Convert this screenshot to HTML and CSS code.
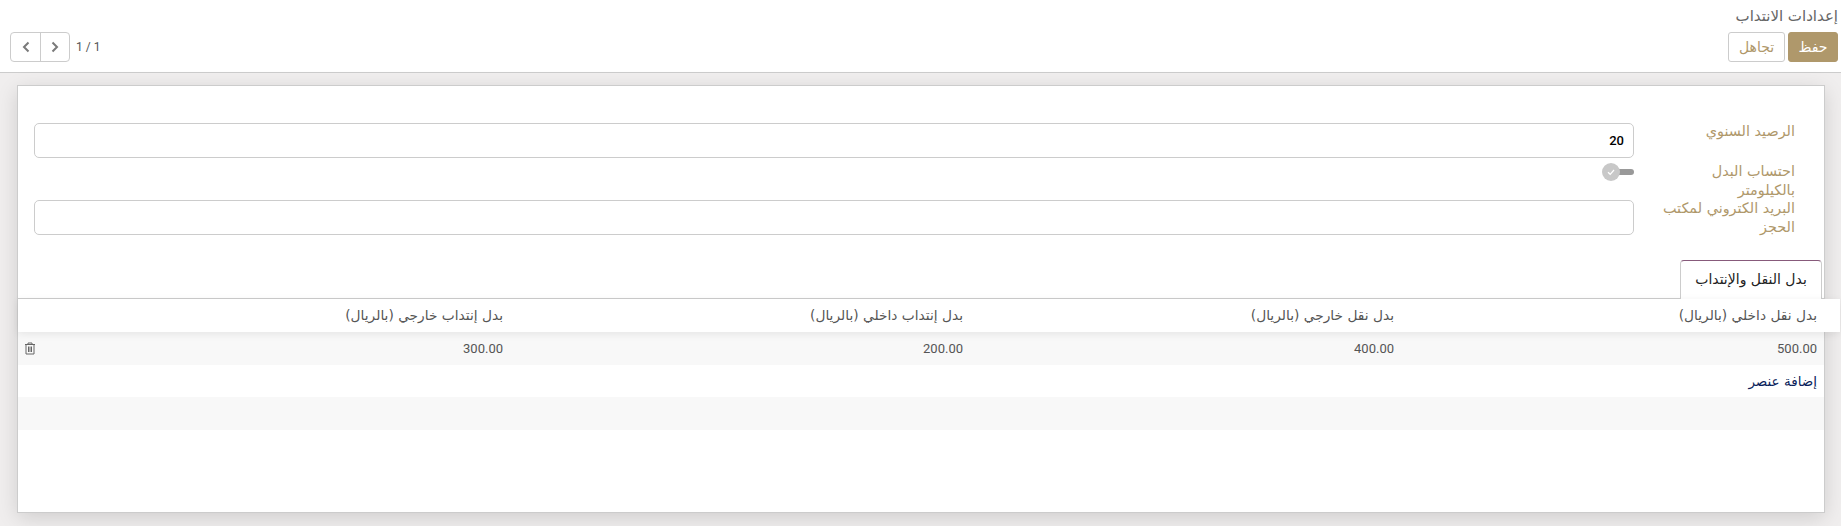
FILE: index.html
```html
<!DOCTYPE html>
<html lang="ar" dir="rtl">

<head>
    <meta charset="UTF-8" />
    <title>إعدادات الانتداب</title>
    <link rel="stylesheet" href="styles.css">
</head>

<body>
    <header class="control-panel">
        <div class="breadcrumb">إعدادات الانتداب</div>
        <div class="panel-row">
            <div class="panel-buttons">
                <button class="btn btn-primary">حفظ</button>
                <button class="btn btn-secondary">تجاهل</button>
            </div>
            <div class="pager">
                <span class="pager-value" dir="ltr">1 / 1</span>
                <div class="pager-buttons" dir="ltr">
                    <button class="pager-btn">
                        <svg width="10" height="12" viewBox="0 0 10 12"><path d="M7.500 1.500 3 6l4.500 4.500" /></svg>
                    </button>
                    <button class="pager-btn">
                        <svg width="10" height="12" viewBox="0 0 10 12"><path d="M2.500 1.500 7 6l-4.500 4.500" /></svg>
                    </button>
                </div>
            </div>
        </div>
    </header>

    <main class="content">
        <section class="sheet">
            <div class="form-group">
                <div class="form-row">
                    <label class="form-label">الرصيد السنوي</label>
                    <input class="form-input" type="text" value="20" dir="rtl">
                </div>
                <div class="form-row form-row-toggle">
                    <label class="form-label">احتساب البدل بالكيلومتر</label>
                    <div class="toggle">
                        <span class="toggle-track"></span>
                        <span class="toggle-knob">
                            <svg width="10" height="10" viewBox="0 0 10 10"><path d="M2 5.200 4.200 7.300 8 3" /></svg>
                        </span>
                    </div>
                </div>
                <div class="form-row">
                    <label class="form-label">البريد الكتروني لمكتب الحجز</label>
                    <input class="form-input" type="text">
                </div>
            </div>

            <div class="tabs">
                <div class="tab">بدل النقل والإنتداب</div>
            </div>

            <div class="list-head list-cols">
                <div>بدل نقل داخلي (بالريال)</div>
                <div>بدل نقل خارجي (بالريال)</div>
                <div>بدل إنتداب داخلي (بالريال)</div>
                <div>بدل إنتداب خارجي (بالريال)</div>
                <div></div>
            </div>
            <div class="list-row list-cols">
                <div>500.00</div>
                <div>400.00</div>
                <div>200.00</div>
                <div>300.00</div>
                <div class="trash">
                    <svg width="12" height="13" viewBox="0 0 12 13">
                        <path d="M1 2.500h10M4 2.500V1h4v1.500M2 2.500v9.500h8V2.500M4.500 4.500v5.500M6 4.500v5.500M7.500 4.500v5.500" />
                    </svg>
                </div>
            </div>
            <div class="list-add"><a class="add-link">إضافة عنصر</a></div>
            <div class="list-empty"></div>
        </section>
    </main>
</body>

</html>
```

FILE: styles.css
```css
* {
    box-sizing: border-box;
}

html,
body {
    height: 100%;
}

body {
    margin: 0;
    background-color: #f0eeee;
    font-family: "DejaVu Sans", "Noto Sans", sans-serif;
    font-size: 14px;
    color: #666;
    overflow: hidden;
    display: flex;
    flex-direction: column;
}

.control-panel {
    height: 73px;
    background-color: #fff;
    border-bottom: 1px solid #ccc;
    padding: 6px 3px 0 3px;
}

.breadcrumb {
    height: 26px;
    line-height: 20px;
    font-size: 15px;
    color: #666;
}

.panel-row {
    display: flex;
    justify-content: space-between;
    align-items: center;
}

.panel-buttons {
    display: flex;
    gap: 3px;
}

.btn {
    height: 30px;
    border-radius: 3px;
    font-family: inherit;
    font-size: 14px;
    padding: 0;
}

.btn-primary {
    width: 50px;
    background-color: #af986b;
    border: 1px solid #af986b;
    color: #fff;
}

.btn-secondary {
    width: 57px;
    background-color: #fff;
    border: 1px solid #ccc;
    color: #af986b;
}

.pager {
    display: flex;
    align-items: center;
    gap: 6px;
    margin-left: 7px;
}

.pager-value {
    font-family: Roboto, sans-serif;
    font-size: 12px;
    color: #555;
}

.pager-buttons {
    display: flex;
    border: 1px solid #ccc;
    border-radius: 4px;
    height: 30px;
}

.pager-btn {
    width: 29px;
    background: none;
    border: none;
    padding: 0;
    display: flex;
    align-items: center;
    justify-content: center;
}

.pager-btn + .pager-btn {
    border-left: 1px solid #ccc;
}

.pager-btn path {
    fill: none;
    stroke: #7a7a7a;
    stroke-width: 2;
}

.content {
    flex: 1;
    padding: 12px 16px 13px 17px;
}

.sheet {
    height: 100%;
    background-color: #fff;
    border: 1px solid #ccc;
    box-shadow: 0 5px 20px -1px rgba(0, 0, 0, 0.15);
}

.form-group {
    padding: 37px 0 0 16px;
}

.form-row {
    display: flex;
    align-items: flex-start;
}

.form-label {
    width: 190px;
    flex-shrink: 0;
    margin-top: -1px;
    padding: 0 29px 0 26px;
    color: #af986b;
    font-size: 14.400px;
    line-height: 19px;
}

.form-input {
    flex: 1;
    height: 35px;
    border: 1px solid #ccc;
    border-radius: 5px;
    padding: 0 9px;
    font-family: Roboto, sans-serif;
    font-size: 13px;
    font-weight: 500;
    color: #000;
    background-color: #fff;
}

.form-row-toggle {
    height: 42px;
}

.form-row-toggle .form-label {
    margin-top: 4px;
}

.toggle {
    position: relative;
    width: 32px;
    height: 18px;
    margin-top: 5px;
}

.toggle-track {
    position: absolute;
    top: 6px;
    right: 0;
    width: 24px;
    height: 6px;
    background-color: #999;
    border-radius: 3px;
}

.toggle-knob {
    position: absolute;
    top: 0;
    left: 0;
    width: 18px;
    height: 18px;
    border-radius: 50%;
    background-color: #c8c8c8;
    display: flex;
    align-items: center;
    justify-content: center;
}

.toggle-knob path {
    fill: none;
    stroke: #fff;
    stroke-width: 1.200;
}

.tabs {
    display: flex;
    margin-top: 23px;
    height: 39px;
    padding-right: 2px;
    border-bottom: 1px solid #ccc;
}

.tab {
    width: 142px;
    height: 39px;
    background-color: #fff;
    border: 1px solid #ccc;
    border-top: 1px solid #875a7b;
    border-bottom: none;
    border-radius: 4px 4px 0 0;
    text-align: center;
    line-height: 36px;
    font-size: 14px;
    color: #222;
}

.list-cols {
    display: grid;
    grid-template-columns: 423px 431px 460px 1fr 60px;
}

.list-head {
    height: 33px;
    line-height: 32px;
    margin-right: -16px;
    padding-right: 23px;
    background-color: #fff;
    box-shadow: 0 2px 8px rgba(0, 0, 0, 0.08);
    position: relative;
    font-size: 13.750px;
    color: #555;
}

.list-row {
    height: 33px;
    line-height: 33px;
    padding-right: 7px;
    background-color: #f8f8f8;
    font-family: Roboto, sans-serif;
    font-size: 13px;
    color: #555;
}

.trash {
    display: flex;
    justify-content: flex-end;
    align-items: center;
    padding-left: 6px;
}

.trash path {
    fill: none;
    stroke: #666;
    stroke-width: 1;
}

.list-add {
    height: 32px;
    line-height: 32px;
    padding-right: 7px;
    background-color: #fff;
    font-size: 13.500px;
}

.add-link {
    color: #0b1f5c;
}

.list-empty {
    height: 33px;
    background-color: #f8f8f8;
}
```
